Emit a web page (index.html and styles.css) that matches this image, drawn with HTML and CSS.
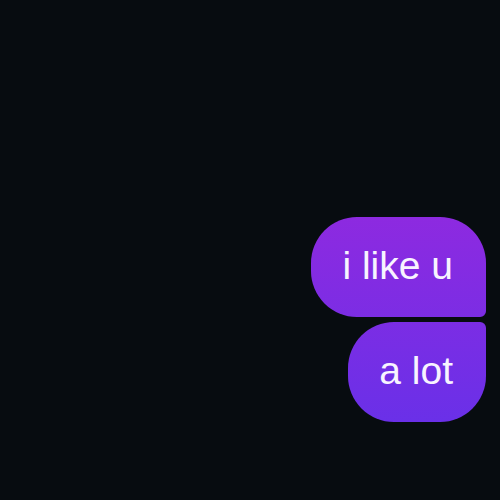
FILE: index.html
```html
<!DOCTYPE html>
<html lang="en">
<head>
  <meta charset="UTF-8" />
  <meta name="viewport" content="width=device-width, initial-scale=1.0"/>
  <title>Messages</title>
  <link rel="stylesheet" href="styles.css">
</head>
<body>
  <div class="chat">
    <div class="bubble first">i like u</div>
    <div class="bubble last">a lot</div>
  </div>
</body>
</html>
```

FILE: styles.css
```css
body {
  margin: 0;
  padding: 0;
  background: #070c10;
  font-family: "Liberation Sans", Arial, sans-serif;
  color: #f8f4ff;
  height: 500px;
  overflow: hidden;
}

.chat {
  display: flex;
  flex-direction: column;
  align-items: flex-end;
  gap: 5px;
  padding: 217px 14px 0 0;
}

.bubble {
  box-sizing: border-box;
  height: 100px;
  padding: 0 33px 2px 31px;
  display: flex;
  align-items: center;
  font-size: 39px;
  background: linear-gradient(180deg, #8d2ae0 217px, #6a30e8 422px) fixed;
}

.first {
  border-radius: 46px 46px 6px 46px;
}

.last {
  border-radius: 46px 6px 46px 46px;
}
```
